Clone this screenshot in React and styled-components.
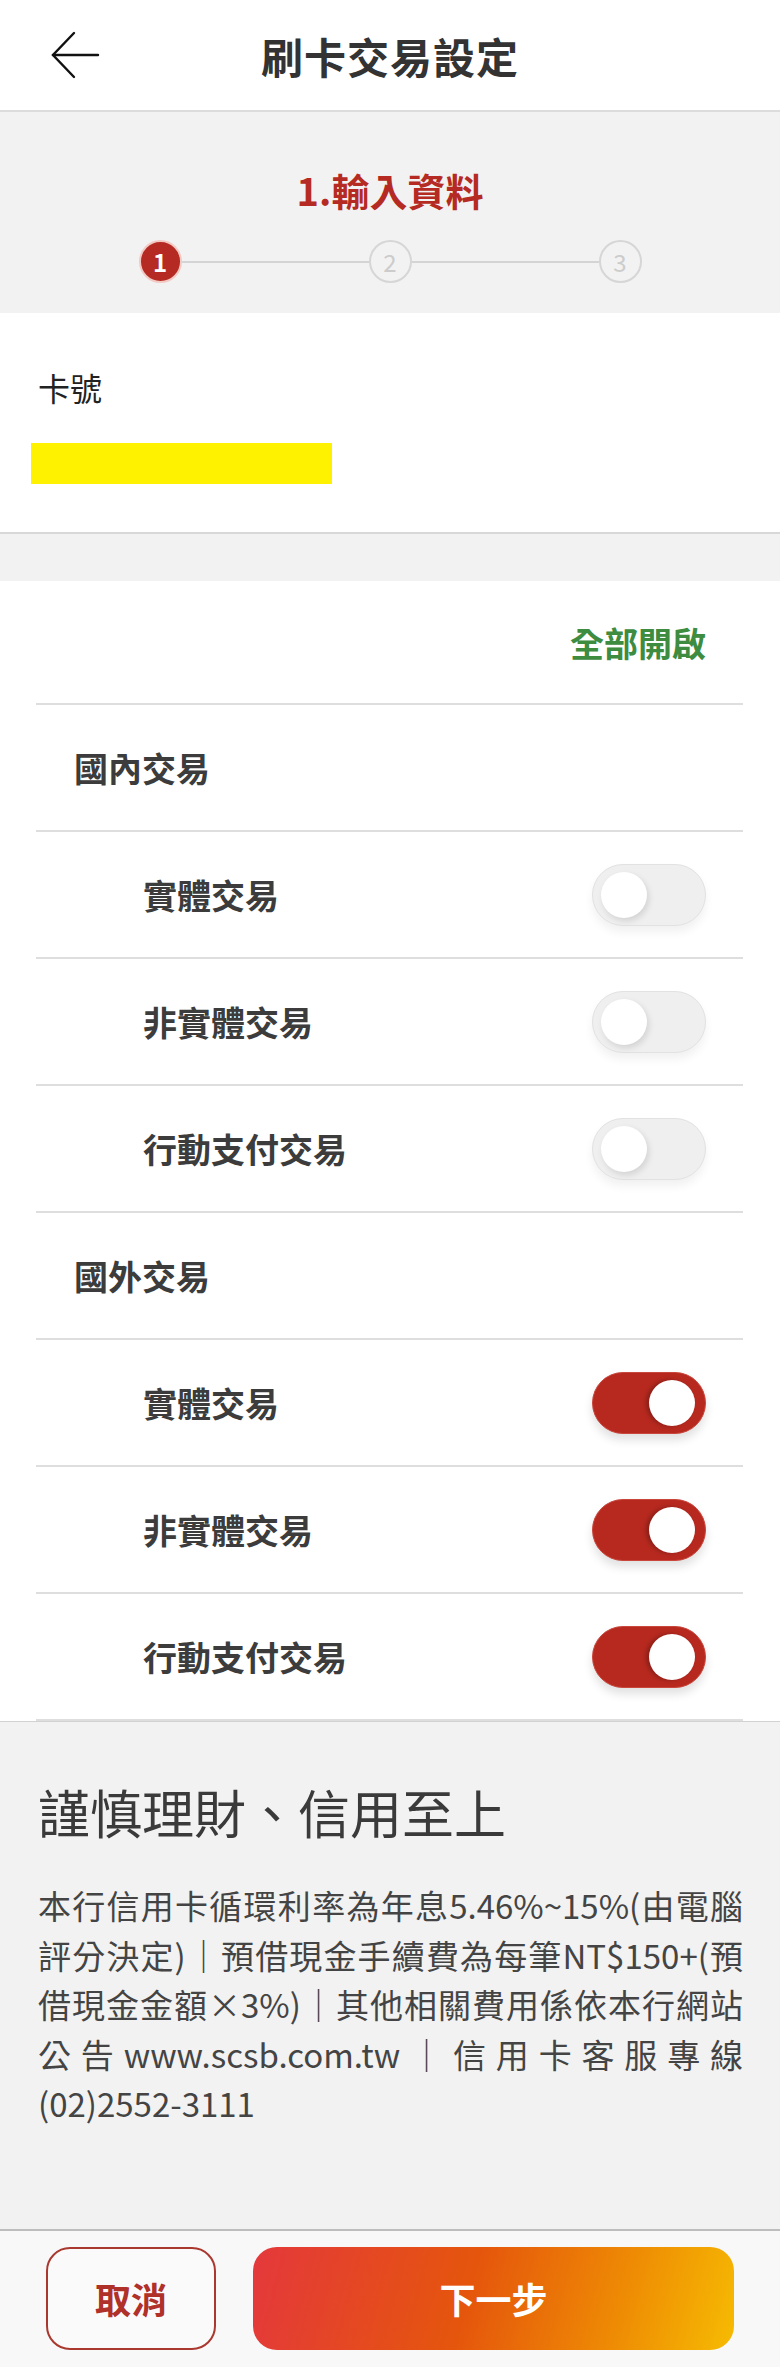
import styled, { createGlobalStyle } from "styled-components";

const GlobalStyle = createGlobalStyle`
    body {
        margin: 0;
        background: #ffffff;
        font-family: "Noto Sans CJK TC", "Noto Sans", sans-serif;
        color: #333;
    }
`;

const Page = styled.div`
    width: 780px;
    display: flex;
    flex-direction: column;
`;

const Header = styled.div`
    height: 110px;
    display: flex;
    align-items: center;
    justify-content: center;
    position: relative;
    border-bottom: 2px solid #dcdcdc;
    background: #fff;
`;

const BackButton = styled.div`
    position: absolute;
    left: 50px;
    top: 30px;
    width: 52px;
    height: 50px;
`;

const Title = styled.h1`
    margin: 0;
    font-size: 42px;
    font-weight: 700;
    color: #333;
    letter-spacing: 1px;
`;

const StepSection = styled.div`
    background: #f2f2f2;
    padding: 50px 0 30px;
    display: flex;
    flex-direction: column;
    align-items: center;
`;

const StepLabel = styled.div`
    font-size: 38px;
    line-height: 56px;
    font-weight: 700;
    color: #b52a22;
`;

const StepRow = styled.div`
    width: 503px;
    margin-top: 22px;
    display: flex;
    align-items: center;
`;

const StepCircle = styled.div`
    width: 43px;
    height: 43px;
    box-sizing: border-box;
    border-radius: 50%;
    display: flex;
    align-items: center;
    justify-content: center;
    font-size: 24px;
    font-weight: ${props => (props.active ? 700 : 400)};
    color: ${props => (props.active ? "#fff" : "#cccccc")};
    background: ${props => (props.active ? "#b52a22" : "transparent")};
    border: 2px solid ${props => (props.active ? "#f3c9c4" : "#d6d6d6")};
`;

const StepLine = styled.div`
    flex: 1;
    height: 2px;
    background: #d4d4d4;
`;

const CardSection = styled.div`
    background: #fff;
    padding: 52px 38px 48px 31px;
    border-bottom: 2px solid #d8d8d8;
`;

const CardLabel = styled.div`
    font-size: 32px;
    line-height: 44px;
    color: #222;
    padding-left: 7px;
`;

const MaskBar = styled.div`
    margin-top: 34px;
    width: 301px;
    height: 41px;
    background: #fff200;
`;

const Gap = styled.div`
    height: 47px;
    background: #f2f2f2;
`;

const SettingsCard = styled.div`
    background: #fff;
    padding: 0 37px 0 36px;
`;

const Row = styled.div`
    height: ${props => (props.top ? "122px" : "125px")};
    display: flex;
    align-items: center;
    justify-content: ${props => (props.top ? "flex-end" : "space-between")};
    border-bottom: 2px solid #dedede;
    padding-left: ${props => (props.sub ? "107px" : "38px")};
    padding-right: 37px;
`;

const OpenAll = styled.span`
    font-size: 34px;
    font-weight: 700;
    color: #3d8c40;
`;

const RowLabel = styled.span`
    font-size: 34px;
    font-weight: 700;
    color: #3c3c3c;
`;

const Track = styled.div`
    width: 114px;
    height: 62px;
    box-sizing: border-box;
    border-radius: 31px;
    display: flex;
    align-items: center;
    justify-content: ${props => (props.on ? "flex-end" : "flex-start")};
    padding: 0 ${props => (props.on ? "10px" : "8px")};
    background: ${props => (props.on ? "#b7291f" : "#efefef")};
    border: 1px solid ${props => (props.on ? "#c9463c" : "#e2e2e2")};
    box-shadow: ${props =>
        props.on ? "0 6px 10px rgba(0,0,0,0.12)" : "0 6px 10px rgba(0,0,0,0.06)"};
`;

const Knob = styled.div`
    width: 46px;
    height: 46px;
    border-radius: 50%;
    background: #fff;
    box-shadow: ${props =>
        props.on ? "-3px 0 4px rgba(0,0,0,0.25)" : "2px 3px 6px rgba(0,0,0,0.12)"};
`;

const Notice = styled.div`
    background: #f2f2f2;
    border-top: 1px solid #d2d2d2;
    padding: 56px 37px 100px 38px;
`;

const NoticeTitle = styled.div`
    font-size: 52px;
    line-height: 68px;
    font-weight: 400;
    color: #3a3a3a;
`;

const NoticeText = styled.p`
    margin: 35px 0 0;
    font-size: 33px;
    line-height: 49.5px;
    color: #444;
    text-align: justify;
`;

const BottomBar = styled.div`
    background: #f8f8f8;
    border-top: 2px solid #bdbdbd;
    padding: 16px 46px 17px;
    display: flex;
    gap: 37px;
`;

const CancelButton = styled.button`
    width: 170px;
    height: 103px;
    border: 2px solid #a9382f;
    border-radius: 24px;
    background: #fafafa;
    font-family: inherit;
    font-size: 36px;
    font-weight: 700;
    color: #b0302a;
`;

const NextButton = styled.button`
    flex: 1;
    height: 103px;
    border: none;
    border-radius: 24px;
    background: linear-gradient(105deg, #e4383c 0%, #e5560c 45%, #ee8a04 75%, #f6bb02 100%);
    font-family: inherit;
    font-size: 36px;
    font-weight: 700;
    color: #fff;
`;

const Toggle = ({ on }) => (
    <Track on={on ? 1 : 0}>
        <Knob on={on ? 1 : 0} />
    </Track>
);

const groups = [
    { title: "國內交易", on: false },
    { title: "國外交易", on: true },
];

const items = ["實體交易", "非實體交易", "行動支付交易"];

const App = () => {
    return (
        <Page>
            <GlobalStyle />
            <Header>
                <BackButton>
                    <svg width="52" height="50" viewBox="0 0 52 50" fill="none" stroke="#111" strokeWidth="2.4" strokeLinecap="round">
                        <line x1="3" y1="25" x2="48" y2="25" />
                        <polyline points="24,3 3,25 24,47" />
                    </svg>
                </BackButton>
                <Title>刷卡交易設定</Title>
            </Header>

            <StepSection>
                <StepLabel>1.輸入資料</StepLabel>
                <StepRow>
                    <StepCircle active>1</StepCircle>
                    <StepLine />
                    <StepCircle>2</StepCircle>
                    <StepLine />
                    <StepCircle>3</StepCircle>
                </StepRow>
            </StepSection>

            <CardSection>
                <CardLabel>卡號</CardLabel>
                <MaskBar />
            </CardSection>

            <Gap />

            <SettingsCard>
                <Row top>
                    <OpenAll>全部開啟</OpenAll>
                </Row>
                {groups.map(group => (
                    <div key={group.title}>
                        <Row>
                            <RowLabel>{group.title}</RowLabel>
                        </Row>
                        {items.map(item => (
                            <Row sub key={item}>
                                <RowLabel>{item}</RowLabel>
                                <Toggle on={group.on} />
                            </Row>
                        ))}
                    </div>
                ))}
            </SettingsCard>

            <Notice>
                <NoticeTitle>謹慎理財、信用至上</NoticeTitle>
                <NoticeText>
                    本行信用卡循環利率為年息5.46%~15%(由電腦評分決定)｜預借現金手續費為每筆NT$150+(預借現金金額×3%)｜其他相關費用係依本行網站公告www.scsb.com.tw｜信用卡客服專線(02)2552-3111
                </NoticeText>
            </Notice>

            <BottomBar>
                <CancelButton>取消</CancelButton>
                <NextButton>下一步</NextButton>
            </BottomBar>
        </Page>
    );
};

export default App;
